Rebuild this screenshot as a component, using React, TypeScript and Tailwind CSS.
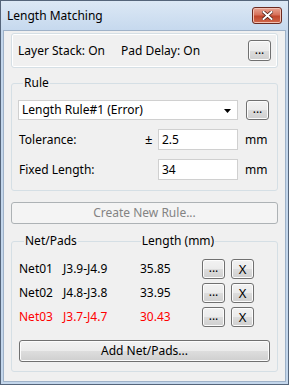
import type { ReactNode } from 'react';

const nets = [
  { net: 'Net01', pads: 'J3.9-J4.9', len: '35.85', bad: false },
  { net: 'Net02', pads: 'J4.8-J3.8', len: '33.95', bad: false },
  { net: 'Net03', pads: 'J3.7-J4.7', len: '30.43', bad: true },
];

function Knop({ children, className = '' }: { children: ReactNode; className?: string }) {
  return (
    <button
      className={`flex items-center justify-center rounded-[3px] border border-[#707070] bg-[linear-gradient(#f2f2f2_0%,#ebebeb_50%,#dddddd_51%,#cfcfcf_100%)] text-[12px] leading-none text-black shadow-[inset_0_0_0_1px_#fcfcfc] ${className}`}
    >
      {children}
    </button>
  );
}

export default function App() {
  return (
    <div
      className="w-[289px] h-[385px] flex flex-col border border-[#55657a] bg-[#c3d6eb] text-black"
      style={{ fontFamily: '"Segoe UI", "Noto Sans", "Liberation Sans", sans-serif' }}
    >
      {/* baslik */}
      <div className="h-[29px] shrink-0 flex items-center justify-between pl-[6px] pr-[6px] bg-[linear-gradient(#dce8f5,#c6d9ee)]">
        <span className="text-[12px] text-black">Length Matching</span>
        <div className="w-[30px] h-[17px] rounded-[3px] border border-[#6b2a20] bg-[linear-gradient(#e8a493_0%,#d7715a_45%,#c1462c_55%,#d0694c_100%)] flex items-center justify-center shadow-[inset_0_0_0_1px_#f2c0b2]">
          <svg width="11" height="9" viewBox="0 0 11 9">
            <path d="M1.5 1 L9.5 8 M9.5 1 L1.5 8" stroke="#4a1a12" strokeWidth="3.4" strokeLinecap="square" />
            <path d="M1.5 1 L9.5 8 M9.5 1 L1.5 8" stroke="#ffffff" strokeWidth="2" strokeLinecap="square" />
          </svg>
        </div>
      </div>

      <div className="flex-1 mx-[2px] mb-[2px] border border-[#9fb2c8] bg-[#f0f0f0] px-[7px] pt-[2px] text-[12px]">
        {/* katman */}
        <div className="h-[35px] rounded-[3px] border border-[#d5dfe5] shadow-[inset_0_0_0_1px_#ffffff] flex items-center pl-[6px] pr-[6px]">
          <span className="w-[103px]">Layer Stack: On</span>
          <span className="flex-1">Pad Delay: On</span>
          <Knop className="w-[23px] h-[21px] pb-[2px] text-[#1c3d6e]">...</Knop>
        </div>

        {/* kural */}
        <fieldset className="mt-[7px] rounded-[3px] border border-[#d5dfe5] pl-[6px] pr-[6px] pb-[10px]">
          <legend className="ml-[5px] px-[1px] leading-[16px]">Rule</legend>
          <div className="flex items-center gap-[8px] mt-[9px]">
            <div className="relative w-[220px] h-[20px] border border-[#d0d0d0] bg-white flex items-center pl-[3px]">
              Length Rule#1 (Error)
              <svg className="absolute right-[6px] top-[8px]" width="7" height="4" viewBox="0 0 7 4">
                <path d="M0 0 H7 L3.5 4 Z" fill="#000" />
              </svg>
            </div>
            <Knop className="w-[23px] h-[20px] pb-[2px] text-[#1c3d6e]">...</Knop>
          </div>
          <div className="flex items-center h-[21px] mt-[9px]">
            <span className="w-[127px] pl-[1px]">Tolerance:</span>
            <span className="w-[13px] text-[13px]">±</span>
            <div className="w-[80px] h-[21px] border border-[#d0d0d0] bg-white flex items-center pl-[3px]">2.5</div>
            <span className="ml-[7px]">mm</span>
          </div>
          <div className="flex items-center h-[21px] mt-[9px]">
            <span className="w-[140px] pl-[1px]">Fixed Length:</span>
            <div className="w-[80px] h-[21px] border border-[#d0d0d0] bg-white flex items-center pl-[3px]">34</div>
            <span className="ml-[7px]">mm</span>
          </div>
        </fieldset>

        {/* yeni kural */}
        <button className="mt-[11px] w-full h-[22px] rounded-[3px] border border-[#adb2b5] bg-[#f4f4f4] text-[#838383] text-[12px]">
          Create New Rule...
        </button>

        {/* netler */}
        <fieldset className="mt-[9px] rounded-[3px] border border-[#d5dfe5] pl-[7px] pr-[7px] pb-[9px]">
          <legend className="ml-[5px] px-[1px] leading-[16px] flex items-center">
            <span>Net/Pads</span>
            <span className="w-[63px] h-px bg-[#d5dfe5] mx-[1px]" />
            <span>Length (mm)</span>
          </legend>
          <div className="mt-[10px] flex flex-col gap-[4px]">
            {nets.map((n) => (
              <div key={n.net} className={`flex items-center h-[20px] ${n.bad ? 'text-[#ff0000]' : ''}`}>
                <span className="w-[44px]">{n.net}</span>
                <span className="w-[77px]">{n.pads}</span>
                <span className="w-[62px]">{n.len}</span>
                <Knop className="w-[23px] h-[20px] pb-[2px] text-[#1c3d6e]">...</Knop>
                <Knop className="ml-[6px] w-[23px] h-[20px] text-[13px] text-[#1c2f55]">X</Knop>
              </div>
            ))}
          </div>
          <Knop className="mt-[13px] w-full h-[22px]">Add Net/Pads...</Knop>
        </fieldset>
      </div>
    </div>
  );
}
